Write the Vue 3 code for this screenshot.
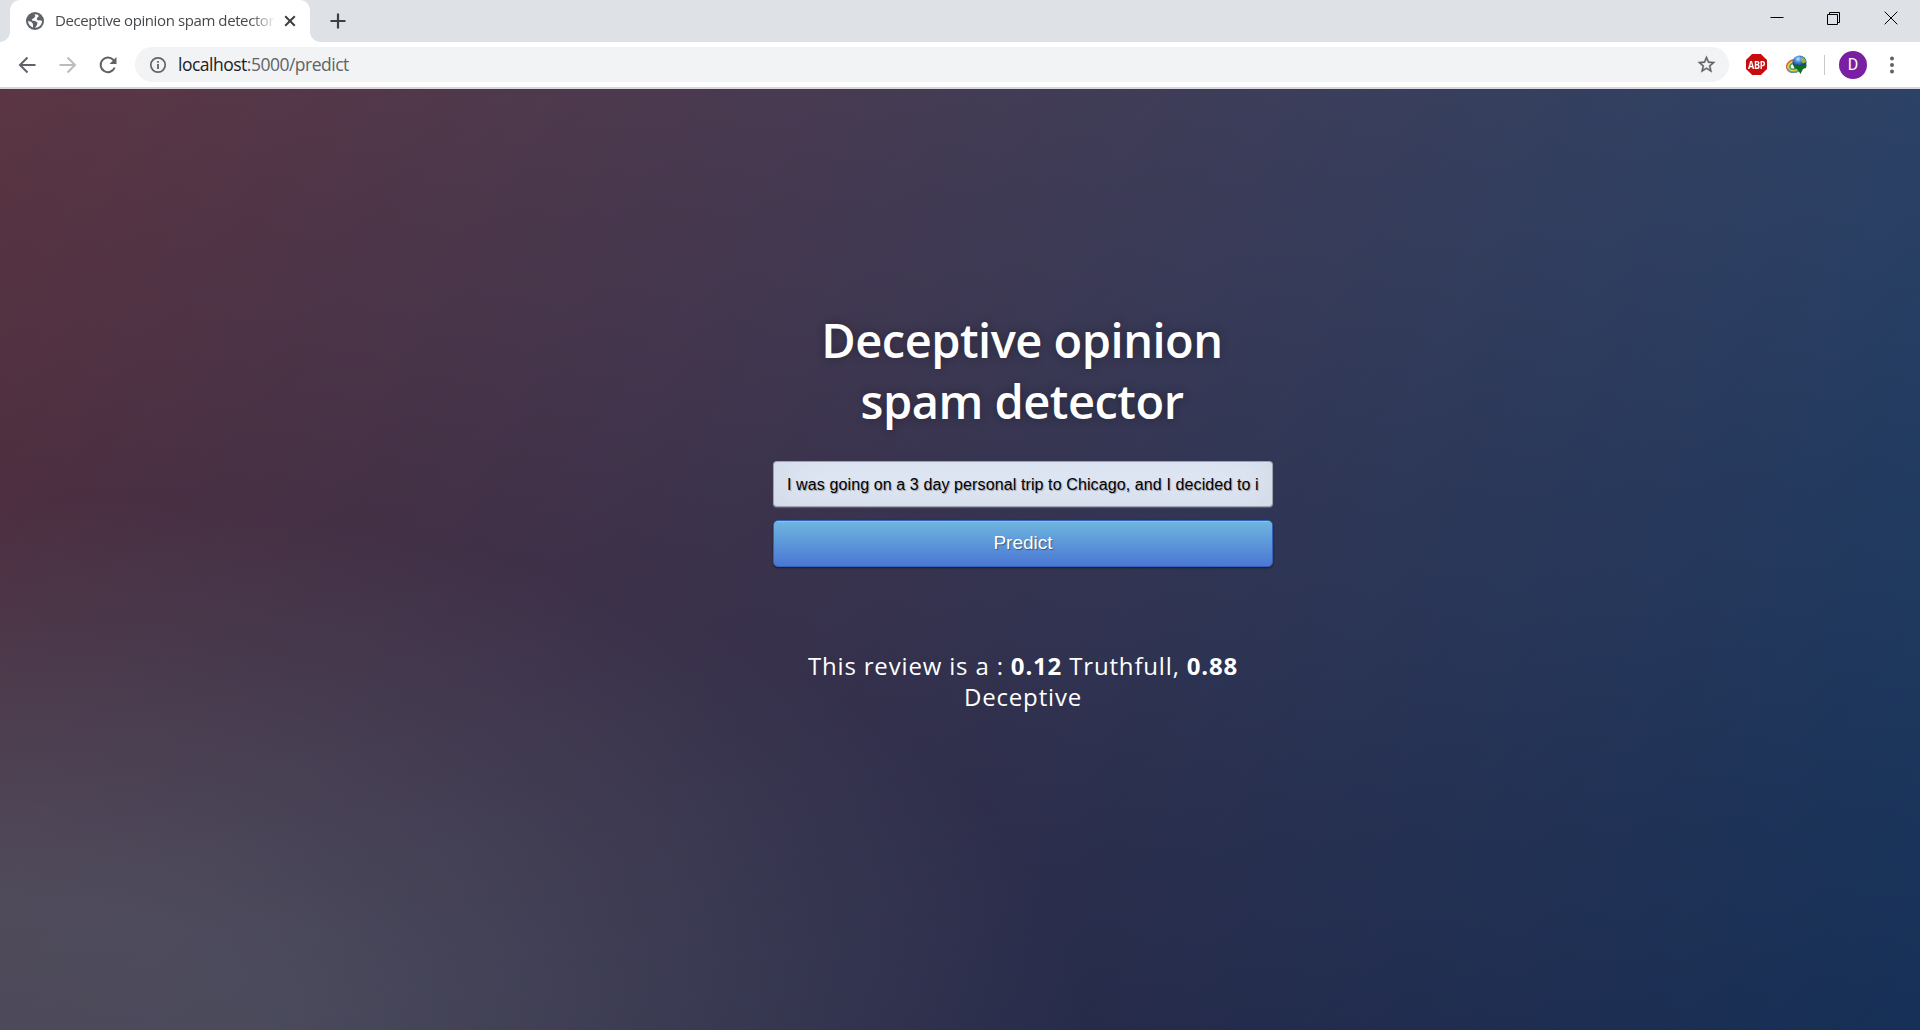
<script setup>
const review = 'I was going on a 3 day personal trip to Chicago, and I decided to i'
</script>

<template>
  <div class="browser">
    <div class="tabs">
      <div class="tab">
        <svg class="favicon" width="18" height="18" viewBox="0 0 18 18">
          <circle cx="9" cy="9" r="9" fill="#5f6368" />
          <path d="M8.6 2.2 9.4 4.3 7.7 6.3 5.9 7.3 6.1 8.6 9.2 9 11.6 10.8 10.9 13.2 8.9 15.7C12.9 15.9 16 12.7 16 9L14.2 8.2 11.9 8.5 10.7 7.2 11.4 5.4 13.1 4 11.2 2.5Z M2.1 9 5.1 9.8 6.9 11.8 7.1 15.5C4.1 14.7 2.1 12.1 2.1 9Z" fill="#fff" />
        </svg>
        <span class="tab-title">Deceptive opinion spam detector</span>
        <svg class="tab-close" width="12" height="12" viewBox="0 0 12 12"><path d="M1.2 1.2 10.8 10.8M10.8 1.2 1.2 10.8" stroke="#3c4043" stroke-width="2" /></svg>
      </div>
      <svg class="new-tab" width="16" height="16" viewBox="0 0 16 16"><path d="M8 .5V15.500M.5 8H15.500" stroke="#3c4043" stroke-width="2.200" /></svg>
      <div class="window-buttons">
        <svg width="14" height="14" viewBox="0 0 14 14"><path d="M.5 6.500H13.500" stroke="#000" /></svg>
        <svg width="14" height="14" viewBox="0 0 14 14" fill="none" stroke="#000"><path d="M.5 3.500H10.500V13.500H.5ZM2.500 3.500V1.500H12.500V11.500H10.500" /></svg>
        <svg width="14" height="14" viewBox="0 0 14 14"><path d="M.7 .7 13.300 13.300M13.300 .7 .7 13.300" stroke="#000" /></svg>
      </div>
    </div>
    <div class="toolbar">
      <svg class="nav" width="20" height="20" viewBox="0 0 20 20" fill="none" stroke="#5f6368" stroke-width="2"><path d="M17.500 10H2.500M9.500 2.500 2 10 9.500 17.500" /></svg>
      <svg class="nav" width="20" height="20" viewBox="0 0 20 20" fill="none" stroke="#babcbe" stroke-width="2"><path d="M1.500 10H16.500M9.500 2.500 17 10 9.500 17.500" /></svg>
      <svg class="nav" width="20" height="20" viewBox="0 0 20 20" fill="none" stroke="#5f6368" stroke-width="2"><path d="M16.700 12.500A7.300 7.300 0 1 1 15.200 4.800L17 6.700" /><path d="M18.500 2V9H11.500Z" fill="#5f6368" stroke="none" /></svg>
      <div class="omnibox">
        <svg width="18" height="18" viewBox="0 0 18 18" fill="none" stroke="#5f6368"><circle cx="9" cy="9" r="7.200" stroke-width="1.700" /><path d="M9 8V13M9 5V6.700" stroke-width="1.800" /></svg>
        <span class="url"><b>localhost</b>:5000/predict</span>
        <svg class="star" width="21" height="21" viewBox="0 0 24 24" fill="#5f6368" stroke="#5f6368" stroke-width=".3"><path d="M22 9.240l-7.190-.62L12 2 9.190 8.630 2 9.240l5.460 4.730L5.820 21 12 17.270 18.180 21l-1.630-7.030L22 9.240zM12 15.400l-3.760 2.270 1-4.280-3.320-2.880 4.380-.38L12 6.100l1.710 4.040 4.380.38-3.320 2.880 1 4.280L12 15.400z" /></svg>
      </div>
      <div class="abp"><span>ABP</span></div>
      <svg class="idm" width="22" height="22" viewBox="0 0 22 22">
        <defs><radialGradient id="globe" cx=".4" cy=".25"><stop offset="0" stop-color="#c5e4ff" /><stop offset=".45" stop-color="#4c8fdf" /><stop offset="1" stop-color="#1b4588" /></radialGradient></defs>
        <g fill="none" transform="rotate(-20 8 12)">
          <ellipse cx="8" cy="12" rx="7.300" ry="6" stroke="#cf5b45" stroke-width="1.700" />
          <ellipse cx="8" cy="12" rx="5.900" ry="4.500" stroke="#ecd63f" stroke-width="1.800" />
          <ellipse cx="8" cy="12" rx="4.300" ry="3" stroke="#45a75e" stroke-width="1.800" />
        </g>
        <path d="M1.500 15C4 19.500 10 19 14 16" fill="none" stroke="#5d98b3" stroke-width="1.600" />
        <circle cx="13.500" cy="8.500" r="7" fill="url(#globe)" />
        <path d="M15.500 3C17.500 3 19.500 5 20.300 8L17 9.500 14.500 6Z" fill="#8fb93b" />
        <path d="M7.500 13 11 9.500 13 12.300 20.800 10.500 20 14 17 15 14.500 20 12 16Z" fill="#0f6f1c" />
      </svg>
      <div class="separator" />
      <div class="avatar">D</div>
      <svg class="menu" width="6" height="20" viewBox="0 0 6 20" fill="#5f6368"><circle cx="3" cy="3.500" r="2" /><circle cx="3" cy="10" r="2" /><circle cx="3" cy="16.500" r="2" /></svg>
    </div>
    <main class="page">
      <div class="detector">
        <h1>Deceptive opinion spam detector</h1>
        <input type="text" :value="review" />
        <button type="button">Predict</button>
        <p>This review is a : <strong>0.12</strong> Truthfull, <strong>0.88</strong> Deceptive</p>
      </div>
    </main>
  </div>
</template>

<style>
body { margin: 0; overflow: hidden; }
</style>

<style scoped>
* { box-sizing: border-box; }
svg { display: block; flex: none; }
.browser { display: flex; flex-direction: column; width: 1920px; height: 1030px; font-family: "Open Sans", sans-serif; }
.tabs { display: flex; height: 42px; padding-left: 10px; background: #dee1e6; }
.tab { position: relative; display: flex; align-items: center; width: 300px; padding-left: 16px; background: #fff; border-radius: 10px 10px 0 0; }
.tab::before, .tab::after { content: ""; position: absolute; bottom: 0; width: 10px; height: 10px; }
.tab::before { left: -10px; background: radial-gradient(circle at 0 0, transparent 9.5px, #fff 10px); }
.tab::after { right: -10px; background: radial-gradient(circle at 100% 0, transparent 9.5px, #fff 10px); }
.tab-title { width: 219px; margin-left: 11px; padding-bottom: 2px; overflow: hidden; white-space: nowrap; font-size: 15px; letter-spacing: -0.4px; color: #45494d; -webkit-mask-image: linear-gradient(to right, #000 195px, transparent 221px); mask-image: linear-gradient(to right, #000 195px, transparent 221px); }
.tab-close { margin-left: 10px; }
.new-tab { margin: 13px 0 0 20px; }
.window-buttons { display: flex; gap: 43px; margin: 11px 22px 0 auto; }
.toolbar { display: flex; align-items: center; height: 47px; padding: 0 25px 0 18px; background: #fff; border-bottom: 2px solid #d8d6dc; }
.nav { margin-right: 20px; }
.omnibox { display: flex; align-items: center; width: 1594px; height: 35px; margin-left: -3px; padding: 0 12px 0 14px; border-radius: 18px; background: #f1f3f4; }
.url { margin-left: 11px; padding-bottom: 1px; font-size: 17.5px; letter-spacing: -0.5px; color: #5f6368; }
.url b { font-weight: 400; color: #202124; }
.star { margin-left: auto; }
.abp { display: flex; align-items: center; justify-content: center; width: 21px; height: 21px; margin-left: 17px; background: #c70d0d; clip-path: polygon(29% 0, 71% 0, 100% 29%, 100% 71%, 71% 100%, 29% 100%, 0 71%, 0 29%); color: #fff; font-size: 11px; font-weight: 700; letter-spacing: -0.2px; }
.abp span { transform: scaleX(.82); }
.idm { margin-left: 19px; }
.separator { width: 1px; height: 20px; margin-left: 16px; background: #c6c8cb; }
.avatar { display: flex; align-items: center; justify-content: center; width: 28px; height: 28px; margin-left: 14px; border-radius: 50%; background: #7b1fa2; color: #fff; font: 16px Roboto, sans-serif; }
.menu { margin-left: auto; }
.page { flex: 1; display: flex; justify-content: center; padding-left: 126px; background: radial-gradient(ellipse at 0% 100%, rgba(104, 128, 138, .4) 10%, rgba(138, 114, 76, 0) 40%), linear-gradient(to bottom, rgba(57, 173, 219, .25) 0%, rgba(42, 60, 87, .4) 100%), linear-gradient(135deg, #670d10 0%, #092756 100%); }
.detector { display: flex; flex-direction: column; width: 500px; color: #fff; text-align: center; }
h1 { margin: 221px 41px 29px 39px; font-size: 47px; line-height: 61px; font-weight: 600; letter-spacing: -0.5px; text-shadow: 0 0 10px rgba(0, 0, 0, .3); }
input { width: 500px; height: 46px; margin: 0; padding: 2px 13px 0; border: 1px solid rgba(0, 0, 0, .3); border-radius: 4px; outline: none; background: #e2eaf8; font: 16px "Liberation Sans", Arial, sans-serif; letter-spacing: 0.11px; color: #000; text-shadow: 1px 1px 1px rgba(0, 0, 0, .3); box-shadow: inset 0 -5px 45px rgba(100, 100, 100, .13), 0 1px 1px rgba(255, 255, 255, .2); }
button { height: 47px; margin-top: 13px; padding: 0 0 2px; border: 1px solid #3762bc; border-radius: 5px; background: linear-gradient(#6eb6de, #4a77d4); box-shadow: inset 0 1px 0 rgba(255, 255, 255, .2), 0 1px 2px rgba(0, 0, 0, .5); color: #fff; font: 19px "Liberation Sans", Arial, sans-serif; text-shadow: 1px 1px 1px rgba(0, 0, 0, .4); }
p { margin: 83px 25px 0; font-size: 24px; line-height: 31px; letter-spacing: 0.83px; }
strong { font-weight: 700; }
</style>
